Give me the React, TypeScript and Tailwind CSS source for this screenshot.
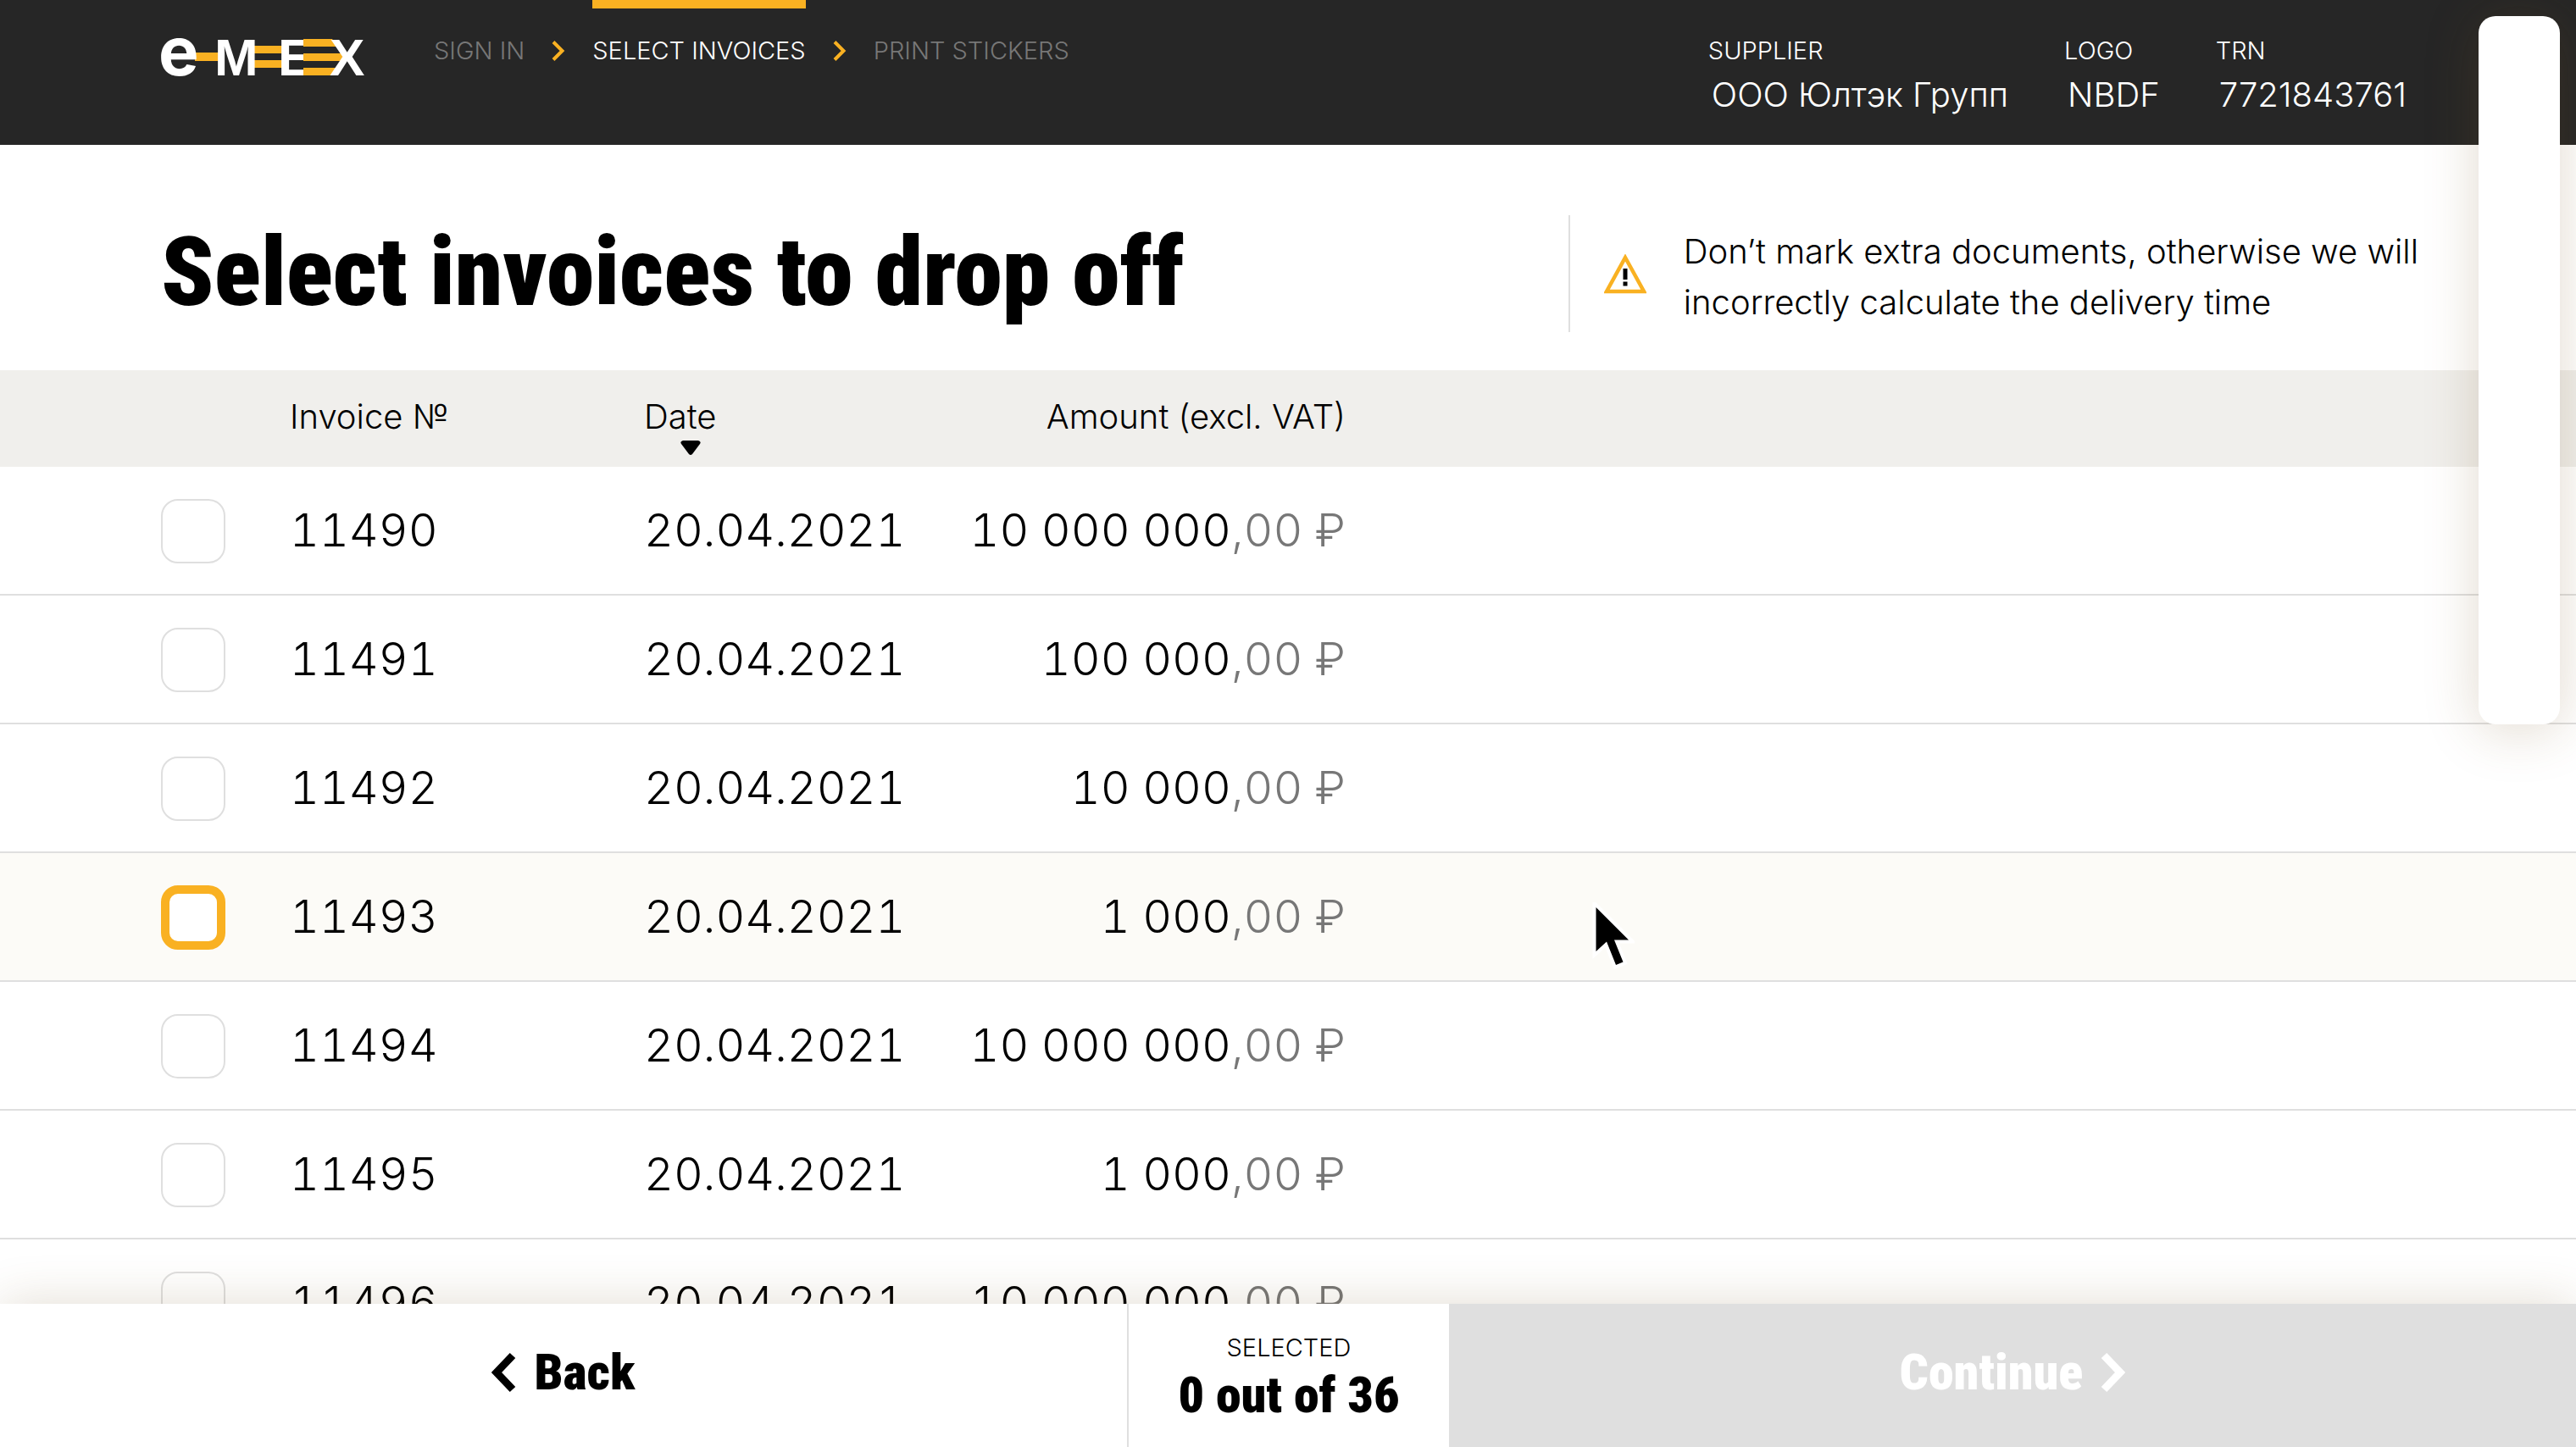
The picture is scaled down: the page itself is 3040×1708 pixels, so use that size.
import { useState } from 'react'
import clsx from 'clsx'

interface Invoice {
  id: string
  date: string
  amount: string
}

const TOTAL = 36

const invoices: Invoice[] = [
  { id: '11490', date: '20.04.2021', amount: '10 000 000' },
  { id: '11491', date: '20.04.2021', amount: '100 000' },
  { id: '11492', date: '20.04.2021', amount: '10 000' },
  { id: '11493', date: '20.04.2021', amount: '1 000' },
  { id: '11494', date: '20.04.2021', amount: '10 000 000' },
  { id: '11495', date: '20.04.2021', amount: '1 000' },
  { id: '11496', date: '20.04.2021', amount: '10 000 000' },
]

const steps = [
  { label: 'SIGN IN', active: false },
  { label: 'SELECT INVOICES', active: true },
  { label: 'PRINT STICKERS', active: false },
]

const account = [
  { label: 'SUPPLIER', value: 'ООО Юлтэк Групп' },
  { label: 'LOGO', value: 'NBDF' },
  { label: 'TRN', value: '7721843761' },
]

function Logo() {
  return (
    <svg
      width="240"
      height="46"
      viewBox="0 0 240 46"
      className="shrink-0 overflow-visible"
      role="img"
      aria-label="emex"
    >
      <path className="fill-[#f9b122]" d="M40 17h30v10H40zM106 9h38v9h-38zM106 26h38v9h-38z" />
      <text x="-3" y="44" fontSize="80" className="fill-white font-['Inter',sans-serif] font-bold">e</text>
      <g className="fill-white font-['Liberation_Sans',sans-serif] font-bold">
        <text x="63" y="44" fontSize="62">M</text>
        <text x="138" y="44" fontSize="62">E</text>
      </g>
      <path className="fill-[#262626]" d="M168 0h34v46h-34z" />
      <path className="fill-[#f9b122]" d="M168 1h34l6 9h-40zM168 18h45l2 5-2 4h-45zM168 35h40l-6 9h-34z" />
      <text x="199" y="44" fontSize="62" className="fill-white font-['Liberation_Sans',sans-serif] font-bold">X</text>
    </svg>
  )
}

function StepArrow() {
  return (
    <svg width="16" height="24" viewBox="0 0 16 24" fill="none" className="mt-12 shrink-0">
      <path d="M2 1.5 12.5 12 2 22.5" stroke="#f9b122" strokeWidth="4" />
    </svg>
  )
}

function Chevron({ flipped = false }: { flipped?: boolean }) {
  return (
    <svg width="30" height="48" viewBox="0 0 30 48" fill="none" className={clsx(flipped && 'rotate-180')}>
      <path d="M25 4 6 24 25 44" stroke="currentColor" strokeWidth="9" />
    </svg>
  )
}

function WarningIcon() {
  return (
    <svg width="50" height="47" viewBox="0 0 50 47" fill="none" className="mb-2 shrink-0">
      <path d="M25 4 47 44H3z" stroke="#f9b122" strokeWidth="4.5" />
      <path d="M25 17v13M25 32.5v5" stroke="#000" strokeWidth="5" />
    </svg>
  )
}

function Pointer() {
  return (
    <svg
      width="52"
      height="80"
      viewBox="0 0 52 80"
      className="pointer-events-none absolute top-[1065px] left-[1877px] z-30"
    >
      <path
        d="M6.5 6v52L19 46.500l11 27.500 8.500-3.500L28 44.500h17z"
        fill="#000"
        stroke="#fff"
        strokeWidth="8"
        paintOrder="stroke"
      />
    </svg>
  )
}

function Header() {
  return (
    <header className="flex items-start justify-between bg-[#262626] pr-[200px] pl-[190px] text-white">
      <div className="flex items-start">
        <a href="#" className="mt-[45px]">
          <Logo />
        </a>
        <nav className="ml-[82px] flex items-start gap-8 text-[29px] leading-9">
          {steps.map((step, i) => (
            <div key={step.label} className="flex items-start gap-8">
              {i > 0 && <StepArrow />}
              <a
                href="#"
                className={clsx(
                  'border-t-10 pt-8',
                  step.active ? 'border-[#f9b122] text-white' : 'border-transparent text-[#777777]',
                )}
              >
                {step.label}
              </a>
            </div>
          ))}
        </nav>
      </div>
      <dl className="flex gap-[66px] pt-[42px] pb-[33px]">
        {account.map((item) => (
          <div key={item.label}>
            <dt className="text-[29px] leading-9">{item.label}</dt>
            <dd className="pt-2 pl-1 text-[40px] leading-[52px]">{item.value}</dd>
          </div>
        ))}
      </dl>
    </header>
  )
}

interface InvoiceRowProps {
  invoice: Invoice
  hovered: boolean
  checked: boolean
  onHover: () => void
  onToggle: () => void
}

function InvoiceRow({ invoice, hovered, checked, onHover, onToggle }: InvoiceRowProps) {
  return (
    <tr
      onMouseEnter={onHover}
      className={clsx('h-[152px] *:border-b-2 *:border-[#dfdfdf]', hovered && 'bg-[#fcfbf7]')}
    >
      <td className="pt-0.5 pl-[190px]">
        <input
          id={`invoice-${invoice.id}`}
          type="checkbox"
          checked={checked}
          onChange={onToggle}
          className={clsx(
            'block size-[76px] appearance-none rounded-[20px] bg-white checked:bg-[#f9b122]',
            hovered ? 'border-10 border-[#f9b122]' : 'border-2 border-[#dfdfdf]',
          )}
        />
      </td>
      <td>
        <label htmlFor={`invoice-${invoice.id}`}>{invoice.id}</label>
      </td>
      <td>{invoice.date}</td>
      <td className="text-right whitespace-nowrap">
        {invoice.amount}
        <span className="text-[#777777]">,00 ₽</span>
      </td>
      <td />
    </tr>
  )
}

export default function App() {
  const [hovered, setHovered] = useState('11493')
  const [selected, setSelected] = useState<string[]>([])

  const toggle = (id: string) =>
    setSelected((prev) => (prev.includes(id) ? prev.filter((x) => x !== id) : [...prev, id]))

  return (
    <div className="relative flex h-screen flex-col overflow-hidden bg-white font-['Inter',sans-serif] font-light text-black">
      <Header />

      <main className="flex min-h-0 flex-1 flex-col overflow-hidden">
        <section className="flex items-center justify-between pt-[83px] pr-[186px] pb-[45px] pl-[190px]">
          <h1 className="pb-1 font-['Roboto_Condensed','Roboto',sans-serif] text-[114px] leading-[132px] font-black">
            Select invoices to drop off
          </h1>
          <div className="flex items-center gap-11 border-l-2 border-[#dfdfdf] pt-[13px] pb-[5px] pl-10">
            <WarningIcon />
            <p className="text-[40px] leading-[60px]">
              Don’t mark extra documents, otherwise we will
              <br />
              incorrectly calculate the delivery time
            </p>
          </div>
        </section>

        <table className="w-full table-fixed border-separate border-spacing-0">
          <colgroup>
            <col className="w-[342px]" />
            <col className="w-[418px]" />
            <col className="w-[300px]" />
            <col className="w-[528px]" />
            <col />
          </colgroup>
          <thead>
            <tr className="h-[114px] bg-[#f0efec] text-left align-top text-[40px] leading-[52px]">
              <th />
              <th className="pt-[29px] font-light">Invoice №</th>
              <th className="pt-[29px] font-light">
                <button type="button" className="relative block">
                  Date
                  <svg width="24" height="18" viewBox="0 0 24 18" className="absolute top-[54px] left-[43px]">
                    <path d="M3 0h18q4 1 2 4L14 16q-2 2-4 0L1 4Q-1 1 3 0z" />
                  </svg>
                </button>
              </th>
              <th className="pt-[29px] text-right font-light">Amount (excl. VAT)</th>
              <th />
            </tr>
          </thead>
          <tbody className="text-[54px] leading-[72px] tabular-nums">
            {invoices.map((invoice) => (
              <InvoiceRow
                key={invoice.id}
                invoice={invoice}
                hovered={hovered === invoice.id}
                checked={selected.includes(invoice.id)}
                onHover={() => setHovered(invoice.id)}
                onToggle={() => toggle(invoice.id)}
              />
            ))}
          </tbody>
        </table>
      </main>

      <footer className="relative z-10 grid grid-cols-[1fr_380px_1fr] bg-white font-['Roboto_Condensed','Roboto',sans-serif] text-[60px] leading-[64px] font-black shadow-[0_0_60px_rgba(110,80,30,0.2)]">
        <button type="button" className="flex items-center justify-center gap-5 pb-2">
          <Chevron />
          Back
        </button>
        <div className="border-l-2 border-[#dfdfdf] pt-[34px] pb-[29px] text-center">
          <p className="font-['Inter',sans-serif] text-[29px] leading-9 font-light">SELECTED</p>
          <p className="pt-1.5">
            {selected.length} out of {TOTAL}
          </p>
        </div>
        <button
          type="button"
          disabled={selected.length === 0}
          className="flex items-center justify-center gap-5 bg-[#dfdfdf] pb-2 text-white"
        >
          Continue
          <Chevron flipped />
        </button>
      </footer>

      <aside className="absolute top-[19px] right-[19px] z-20 h-[836px] w-24 rounded-[20px] bg-white shadow-[0_6px_64px_rgba(120,80,30,0.22)]" />
      <Pointer />
    </div>
  )
}
